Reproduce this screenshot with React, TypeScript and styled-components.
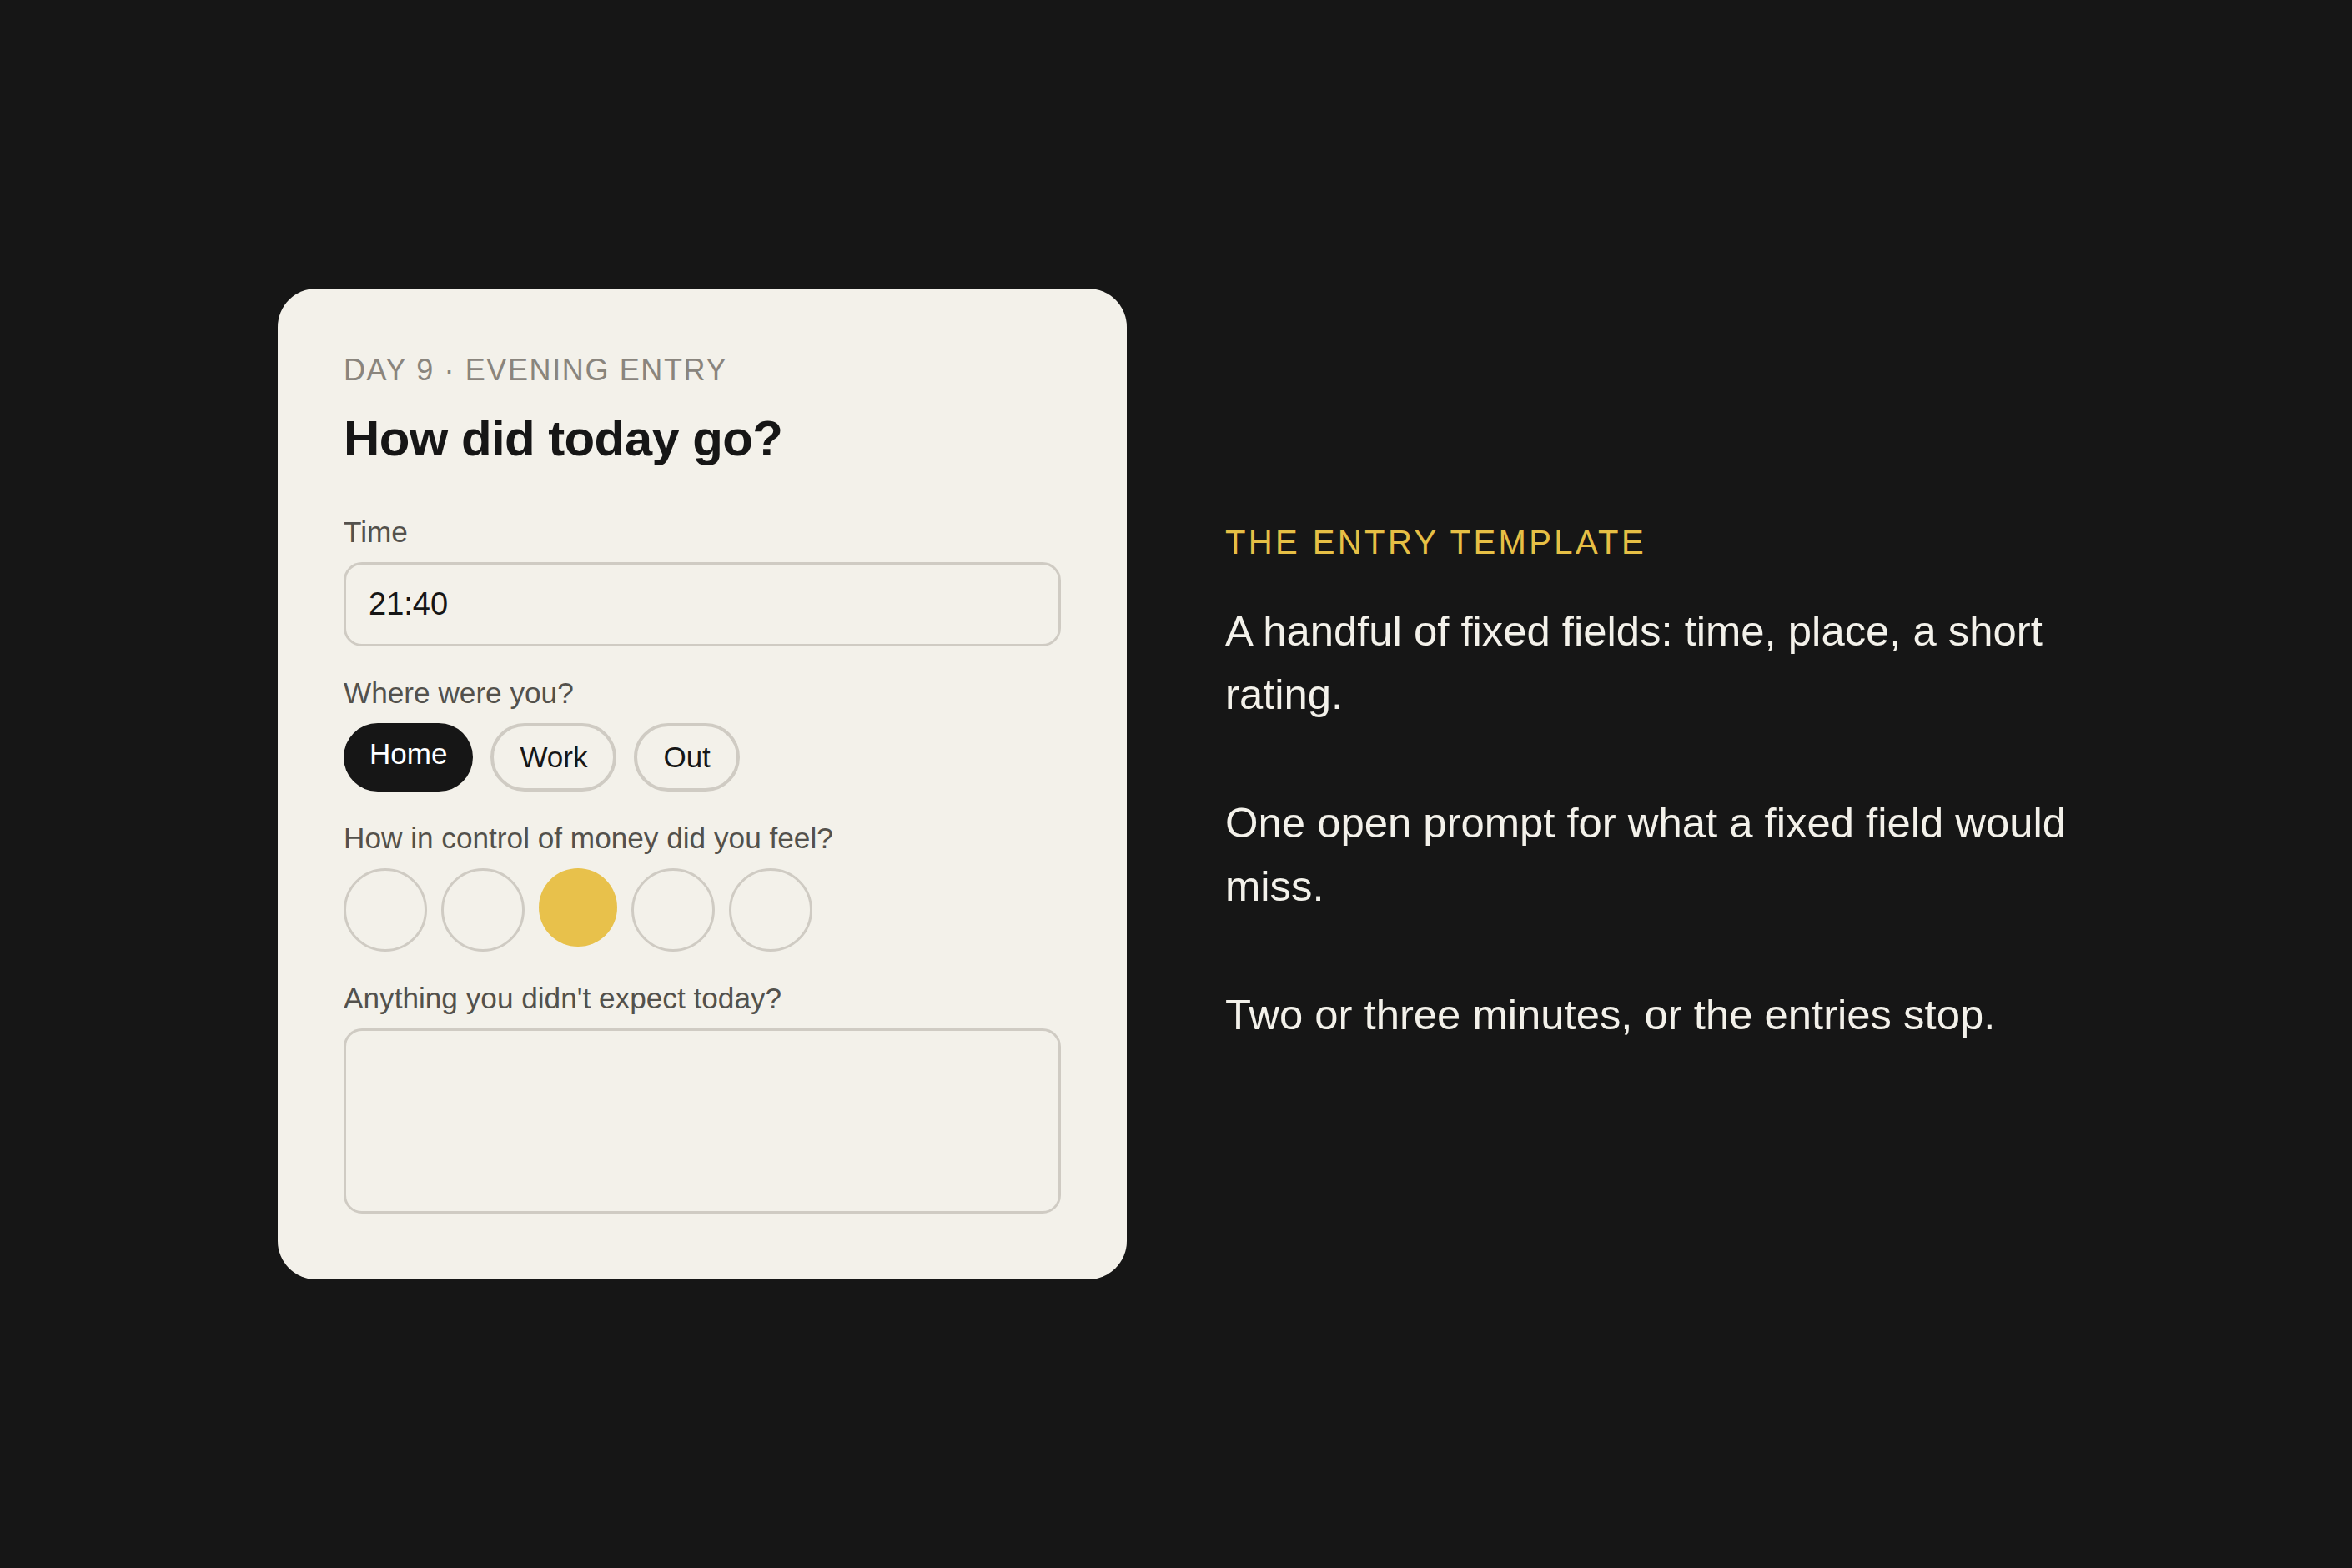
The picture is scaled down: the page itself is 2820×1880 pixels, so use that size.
import React from 'react';
import styled, { createGlobalStyle } from 'styled-components';

const GlobalStyle = createGlobalStyle`
    * {
        box-sizing: border-box;
    }
    html, body {
        margin: 0;
        padding: 0;
        background: #161616;
    }
    body {
        font-family: "Liberation Sans", Arial, Helvetica, sans-serif;
    }
`;

const Page = styled.main`
    min-height: 100vh;
    display: grid;
    grid-template-columns: 1018px 1018px;
    column-gap: 118px;
    justify-content: center;
    align-items: center;
`;

const Card = styled.section`
    background: #f3f1ea;
    border-radius: 46px;
    padding: 76px 79px 79px;
    display: flex;
    flex-direction: column;
`;

const Eyebrow = styled.div`
    font-size: 36px;
    line-height: 1.2;
    letter-spacing: 0.045em;
    color: #8a857d;
    text-transform: uppercase;
`;

const Title = styled.h1`
    margin: 24px 0 56px;
    font-size: 60px;
    line-height: 72px;
    font-weight: 700;
    letter-spacing: -0.01em;
    color: #161616;
`;

const Fields = styled.div`
    display: flex;
    flex-direction: column;
    gap: 36px;
`;

const Field = styled.div`
    display: flex;
    flex-direction: column;
    gap: 16px;
`;

const Label = styled.label`
    font-size: 35.2px;
    line-height: 40px;
    color: #53514c;
`;

const TextInput = styled.input`
    width: 100%;
    height: 101px;
    padding: 0 27px;
    border: 3px solid #cfcbc3;
    border-radius: 22px;
    background: transparent;
    font-family: inherit;
    font-size: 38px;
    color: #161616;
    outline: none;
`;

const ChipRow = styled.div`
    display: flex;
    gap: 21px;
    align-items: flex-start;
`;

const Chip = styled.button<{ $active?: boolean }>`
    height: 82px;
    padding: 0 31px ${(p) => (p.$active ? '8px' : '0')};
    border: ${(p) => (p.$active ? 'none' : '4px solid #cfcbc3')};
    border-radius: 999px;
    background: ${(p) => (p.$active ? '#161616' : 'transparent')};
    color: ${(p) => (p.$active ? '#ffffff' : '#161616')};
    font-family: inherit;
    font-size: 35px;
    line-height: 40px;
    cursor: pointer;
`;

const Scale = styled.div`
    display: flex;
    gap: 17px;
    align-items: flex-start;
`;

const Dot = styled.button<{ $active?: boolean }>`
    box-sizing: content-box;
    width: 94px;
    height: 94px;
    padding: 0;
    border-radius: 50%;
    border: ${(p) => (p.$active ? 'none' : '3px solid #cfcbc3')};
    background: ${(p) => (p.$active ? '#e8c14b' : 'transparent')};
    cursor: pointer;
`;

const TextArea = styled.textarea`
    width: 100%;
    height: 222px;
    padding: 24px 27px;
    border: 3px solid #cfcbc3;
    border-radius: 22px;
    background: transparent;
    font-family: inherit;
    font-size: 35px;
    resize: none;
    outline: none;
`;

const Notes = styled.aside`
    color: #f3f1ea;
`;

const NotesTitle = styled.h2`
    margin: 0 0 45px;
    font-size: 40px;
    line-height: 48px;
    font-weight: 400;
    letter-spacing: 0.085em;
    color: #e6bf45;
    text-transform: uppercase;
`;

const Note = styled.p`
    margin: 0 0 78px;
    font-size: 50.8px;
    line-height: 76px;
    &:last-child {
        margin-bottom: 0;
    }
`;

const places = ['Home', 'Work', 'Out'];
const ratings = [1, 2, 3, 4, 5];

export default function App(): JSX.Element {
    return (
        <>
            <GlobalStyle />
            <Page>
                <Card>
                    <Eyebrow>Day 9 · Evening entry</Eyebrow>
                    <Title>How did today go?</Title>
                    <Fields>
                        <Field>
                            <Label>Time</Label>
                            <TextInput defaultValue="21:40" />
                        </Field>
                        <Field>
                            <Label>Where were you?</Label>
                            <ChipRow>
                                {places.map((place) => (
                                    <Chip key={place} $active={place === 'Home'}>
                                        {place}
                                    </Chip>
                                ))}
                            </ChipRow>
                        </Field>
                        <Field>
                            <Label>How in control of money did you feel?</Label>
                            <Scale>
                                {ratings.map((r) => (
                                    <Dot key={r} $active={r === 3} aria-label={'Rating ' + r} />
                                ))}
                            </Scale>
                        </Field>
                        <Field>
                            <Label>Anything you didn't expect today?</Label>
                            <TextArea />
                        </Field>
                    </Fields>
                </Card>
                <Notes>
                    <NotesTitle>The entry template</NotesTitle>
                    <Note>A handful of fixed fields: time, place, a short rating.</Note>
                    <Note>One open prompt for what a fixed field would miss.</Note>
                    <Note>Two or three minutes, or the entries stop.</Note>
                </Notes>
            </Page>
        </>
    );
}
